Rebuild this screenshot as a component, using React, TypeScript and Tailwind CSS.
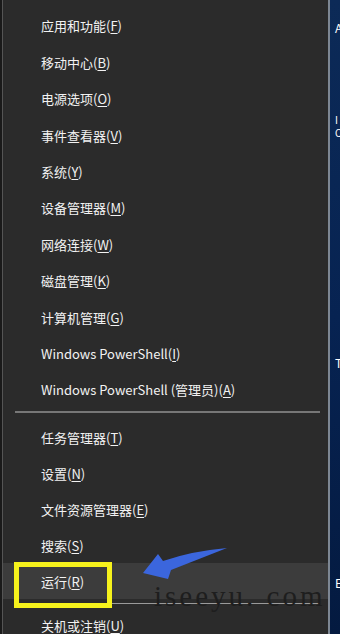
import React from 'react'

type Item = { label: string; key: string }

const groupOne: Item[] = [
  { label: '应用和功能', key: 'F' },
  { label: '移动中心', key: 'B' },
  { label: '电源选项', key: 'O' },
  { label: '事件查看器', key: 'V' },
  { label: '系统', key: 'Y' },
  { label: '设备管理器', key: 'M' },
  { label: '网络连接', key: 'W' },
  { label: '磁盘管理', key: 'K' },
  { label: '计算机管理', key: 'G' },
  { label: 'Windows PowerShell', key: 'I' },
  { label: 'Windows PowerShell (管理员)', key: 'A' },
]

const groupTwo: Item[] = [
  { label: '任务管理器', key: 'T' },
  { label: '设置', key: 'N' },
  { label: '文件资源管理器', key: 'E' },
  { label: '搜索', key: 'S' },
  { label: '运行', key: 'R' },
]

function MenuRow({ item, active, tall }: { item: Item; active?: boolean; tall?: boolean }) {
  return (
    <div
      className={`flex shrink-0 items-center pl-[38px] text-[13px] text-[#f2f2f2] ${
        tall ? 'h-[36.4px]' : 'h-[36px]'
      } ${active ? 'bg-[#3c3c3c]' : ''}`}
    >
      <span>
        {item.label}(<u className="underline-offset-2">{item.key}</u>)
      </span>
    </div>
  )
}

export default function App() {
  return (
    <div
      className="relative flex h-[634px] w-[340px] overflow-hidden bg-[#1c1c1c]"
      style={{ fontFamily: '"Noto Sans CJK SC", "Noto Sans", sans-serif' }}
    >
      <div className="w-[2px] shrink-0 bg-[#1a1a1a]" />

      {/* context menu */}
      <div className="flex w-[328px] shrink-0 flex-col border-l border-r-2 border-l-[#555] border-r-[#7d8793] bg-[#2b2b2b] pt-[8px]">
        {groupOne.map((item) => (
          <MenuRow key={item.label} item={item} tall />
        ))}
        <div className="mb-[6px] ml-[12px] mr-[8px] mt-[3px] h-[2px] shrink-0 bg-[#777]" />
        {groupTwo.map((item) => (
          <MenuRow key={item.label} item={item} active={item.key === 'R'} />
        ))}
        <div className="mb-[3px] ml-[12px] mr-[8px] mt-[4px] h-[1px] shrink-0 bg-[#9a9a9a]" />
        <MenuRow item={{ label: '关机或注销', key: 'U' }} />
      </div>

      {/* desktop strip on the right */}
      <div className="flex-1 bg-gradient-to-b from-[#0c2a57] via-[#072352] to-[#041a40] pl-[5px] text-[12px] leading-none text-white">
        <div className="pt-[22px]">A</div>
        <div className="pt-[81px] text-[10px]">I</div>
        <div className="pt-[3px] text-[10px]">C</div>
        <div className="pt-[219px]">T</div>
        <div className="pt-[208px]">E</div>
      </div>

      {/* yellow annotation box */}
      <div className="absolute left-[14px] top-[562px] h-[46px] w-[98px] border-[5px] border-[#f6f21c]" />

      {/* blue arrow */}
      <svg className="absolute left-[138px] top-[544px]" width="95" height="40" viewBox="138 544 95 40">
        <path
          d="M143 573 L158 554 L163 561 Q192 551 227 548 Q199 559 171 570 L168 579 Z"
          fill="#3b66dd"
        />
      </svg>

      {/* watermark */}
      <div
        className="absolute left-[154px] top-[582px] text-[29px] leading-none tracking-[3px] text-[#1e1e1e]"
        style={{ fontFamily: '"Liberation Serif", serif' }}
      >
        iseeyu. com
      </div>
    </div>
  )
}
